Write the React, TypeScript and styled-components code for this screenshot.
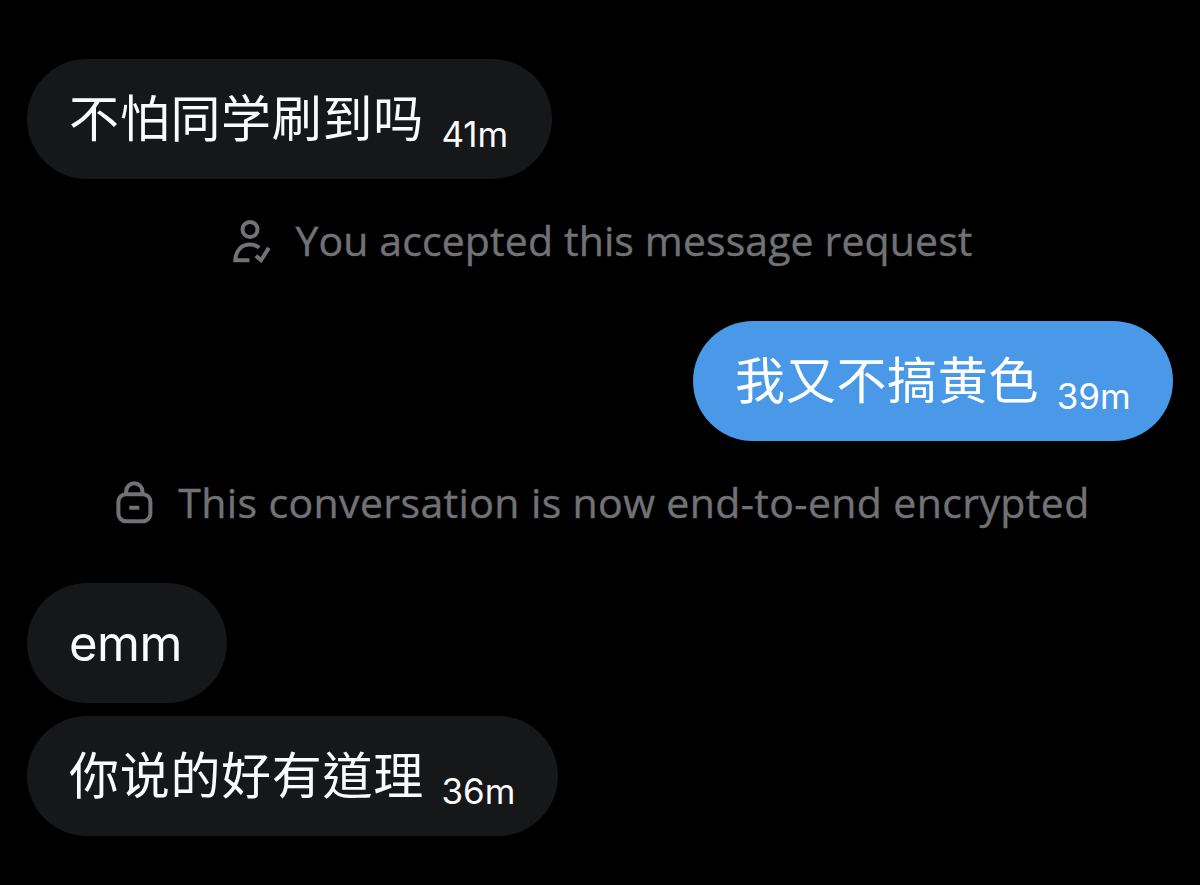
import React from "react";
import styled, { createGlobalStyle } from "styled-components";

const GlobalStyle = createGlobalStyle`
  body {
    margin: 0;
    background: #000;
  }
`;

const Conversation = styled.main`
  display: flex;
  flex-direction: column;
  box-sizing: border-box;
  width: 1200px;
  height: 885px;
  padding: 59px 27px 0;
  overflow: hidden;
  background: #000;
`;

const Bubble = styled.div<{ $own?: boolean; $width: number }>`
  display: flex;
  align-items: center;
  flex-shrink: 0;
  align-self: ${props => (props.$own ? "flex-end" : "flex-start")};
  box-sizing: border-box;
  width: ${props => props.$width}px;
  height: 120px;
  padding: 0 0 0 42px;
  border-radius: 60px;
  color: ${props => (props.$own ? "#fff" : "#fafafb")};
  background: ${props => (props.$own ? "#4a99e9" : "#151719")};
  white-space: nowrap;

  & + & {
    margin-top: 13px;
  }
`;

const Message = styled.span<{ $latin?: boolean; $region?: string }>`
  margin-top: ${props => (props.$latin ? 2 : -8)}px;
  font-family: ${props => (props.$latin ? "Inter, " : "")}"Noto Sans CJK ${props => props.$region || "SC"}", sans-serif;
  font-size: ${props => (props.$latin ? 49 : 50)}px;
  line-height: 74px;
  letter-spacing: ${props => (props.$latin ? -0.5 : 0.7)}px;
`;

const Time = styled.time`
  margin: 29px 0 0 17.5px;
  font-family: Inter, sans-serif;
  font-size: 35px;
  line-height: 42px;
  letter-spacing: 0;
`;

const Notice = styled.div<{ $gap: number }>`
  display: flex;
  flex-shrink: 0;
  align-items: center;
  justify-content: center;
  gap: ${props => props.$gap}px;
  height: 142px;
  color: #717276;
`;

const NoticeText = styled.span<{ $spacing: number }>`
  margin-top: -20px;
  font-family: "Open Sans", sans-serif;
  font-size: 41px;
  line-height: 56px;
  letter-spacing: ${props => props.$spacing}px;
  white-space: nowrap;
  -webkit-text-stroke: 0.4px currentColor;
`;

const Icon = styled.svg`
  flex-shrink: 0;
  margin-top: -16px;
  fill: none;
  stroke: currentColor;
  stroke-width: 4;
`;

const AcceptedIcon = () => (
  <Icon width="44" height="46" viewBox="-1 0 44 46">
    <circle cx="22" cy="10.5" r="7.5" />
    <path d="M21.5 41.2H7.3C7.8 31 13.8 25.6 21.8 25.6c4 0 7 1 9.5 3.2" />
    <path d="m27.8 36.7 5.3 4.5 7.7-12.3" />
  </Icon>
);

const LockIcon = () => (
  <Icon width="44" height="46" viewBox="0 0 44 46">
    <rect x="8.4" y="13.2" width="32" height="27" rx="7.5" />
    <path d="M16.2 13v-2.6a8.1 8.1 0 0 1 16.2 0V13M19.3 26.8h10" />
  </Icon>
);

export default function App() {
  return (
    <>
      <GlobalStyle />
      <Conversation>
        <Bubble $width={525}>
          <Message>不怕同学刷到吗</Message>
          <Time>41m</Time>
        </Bubble>
        <Notice $gap={24}>
          <AcceptedIcon />
          <NoticeText $spacing={0.12}>You accepted this message request</NoticeText>
        </Notice>
        <Bubble $own $width={480}>
          <Message>我又不搞黄色</Message>
          <Time>39m</Time>
        </Bubble>
        <Notice $gap={24}>
          <LockIcon />
          <NoticeText $spacing={0.38}>This conversation is now end-to-end encrypted</NoticeText>
        </Notice>
        <Bubble $width={200}>
          <Message $latin>emm</Message>
        </Bubble>
        <Bubble $width={531}>
          <Message $region="TC">你说的好有道理</Message>
          <Time>36m</Time>
        </Bubble>
      </Conversation>
    </>
  );
}
